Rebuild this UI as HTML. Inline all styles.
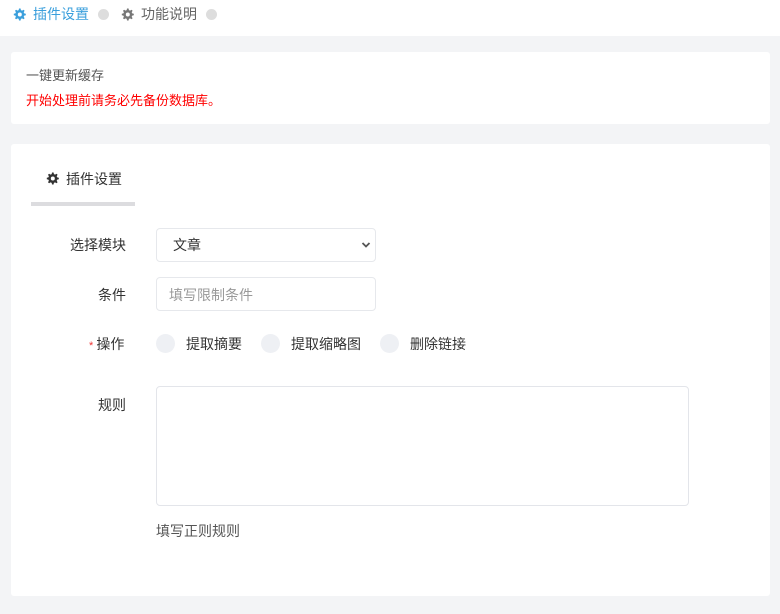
<!DOCTYPE html>
<html><head><meta charset="utf-8"><style>
*{margin:0;padding:0;box-sizing:border-box}
body{width:780px;height:614px;background:#f3f4f6;font-family:"Liberation Sans","Noto Sans CJK SC",sans-serif;font-size:14px;line-height:18px;color:#333;position:relative;overflow:hidden}
.top{position:absolute;left:0;top:0;width:780px;height:36px;background:#fff}
.abs{position:absolute;white-space:nowrap}
.dot{position:absolute;width:11px;height:11px;border-radius:50%;background:#ddd}
.card{position:absolute;background:#fff;border-radius:3px}
.in{position:absolute;left:156px;width:220px;height:34px;border:1px solid #e6e8ec;border-radius:4px;background:#fff}
.rad{position:absolute;width:19px;height:19px;border-radius:50%;background:#eef0f4}
</style></head><body>
<svg width="0" height="0" style="position:absolute"><defs><g id="g"><path d="M6 0.5h1.6l.3 1.6 1.2.5 1.4-.9 1.1 1.1-.9 1.4.5 1.2 1.6.3v1.6l-1.6.3-.5 1.2.9 1.4-1.1 1.1-1.4-.9-1.2.5-.3 1.6H6l-.3-1.6-1.2-.5-1.4.9-1.1-1.1.9-1.4-.5-1.2L.8 7.3V5.7l1.6-.3.5-1.2-.9-1.4 1.1-1.1 1.4.9 1.2-.5z" fill="currentColor"/><circle cx="6.8" cy="6.5" r="2" fill="#fff"/></g></defs></svg>
<div class="top"></div>
<svg class="abs" style="left:13px;top:8px;color:#3a9fdc" width="14" height="14"><use href="#g"/></svg>
<div class="abs" style="left:33px;top:5px;color:#3a9fdc">插件设置</div>
<div class="dot" style="left:98px;top:9px"></div>
<svg class="abs" style="left:121px;top:8px;color:#777" width="14" height="14"><use href="#g"/></svg>
<div class="abs" style="left:141px;top:5px;color:#666">功能说明</div>
<div class="dot" style="left:206px;top:9px"></div>

<div class="card" style="left:11px;top:52px;width:759px;height:72px"></div>
<div class="abs" style="left:26px;top:67px;color:#555;font-size:13px">一键更新缓存</div>
<div class="abs" style="left:26px;top:92px;color:#f00;font-size:13px">开始处理前请务必先备份数据库。</div>

<div class="card" style="left:11px;top:144px;width:759px;height:452px"></div>
<svg class="abs" style="left:46px;top:172px;color:#333" width="14" height="14"><use href="#g"/></svg>
<div class="abs" style="left:66px;top:170px">插件设置</div>
<div class="abs" style="left:31px;top:202px;width:104px;height:4px;background:#dcdcdf"></div>

<div class="abs" style="left:70px;top:236px">选择模块</div>
<div class="in" style="top:228px"></div>
<div class="abs" style="left:173px;top:236px">文章</div>
<svg class="abs" style="left:361px;top:241px" width="10" height="8"><path d="M1.5 2l3.5 3.5 3.5-3.5" stroke="#555" stroke-width="1.8" fill="none"/></svg>

<div class="abs" style="left:98px;top:286px">条件</div>
<div class="in" style="top:277px"></div>
<div class="abs" style="left:169px;top:286px;color:#999">填写限制条件</div>

<div class="abs" style="left:89px;top:335px"><span style="color:#e33;font-size:11px">* </span>操作</div>
<div class="rad" style="left:156px;top:334px"></div>
<div class="abs" style="left:186px;top:335px">提取摘要</div>
<div class="rad" style="left:261px;top:334px"></div>
<div class="abs" style="left:291px;top:335px">提取缩略图</div>
<div class="rad" style="left:380px;top:334px"></div>
<div class="abs" style="left:410px;top:335px">删除链接</div>

<div class="abs" style="left:98px;top:396px">规则</div>
<div class="abs" style="left:156px;top:386px;width:533px;height:120px;border:1px solid #e3e5ea;border-radius:4px"></div>
<div class="abs" style="left:156px;top:522px;color:#555">填写正则规则</div>
</body></html>
